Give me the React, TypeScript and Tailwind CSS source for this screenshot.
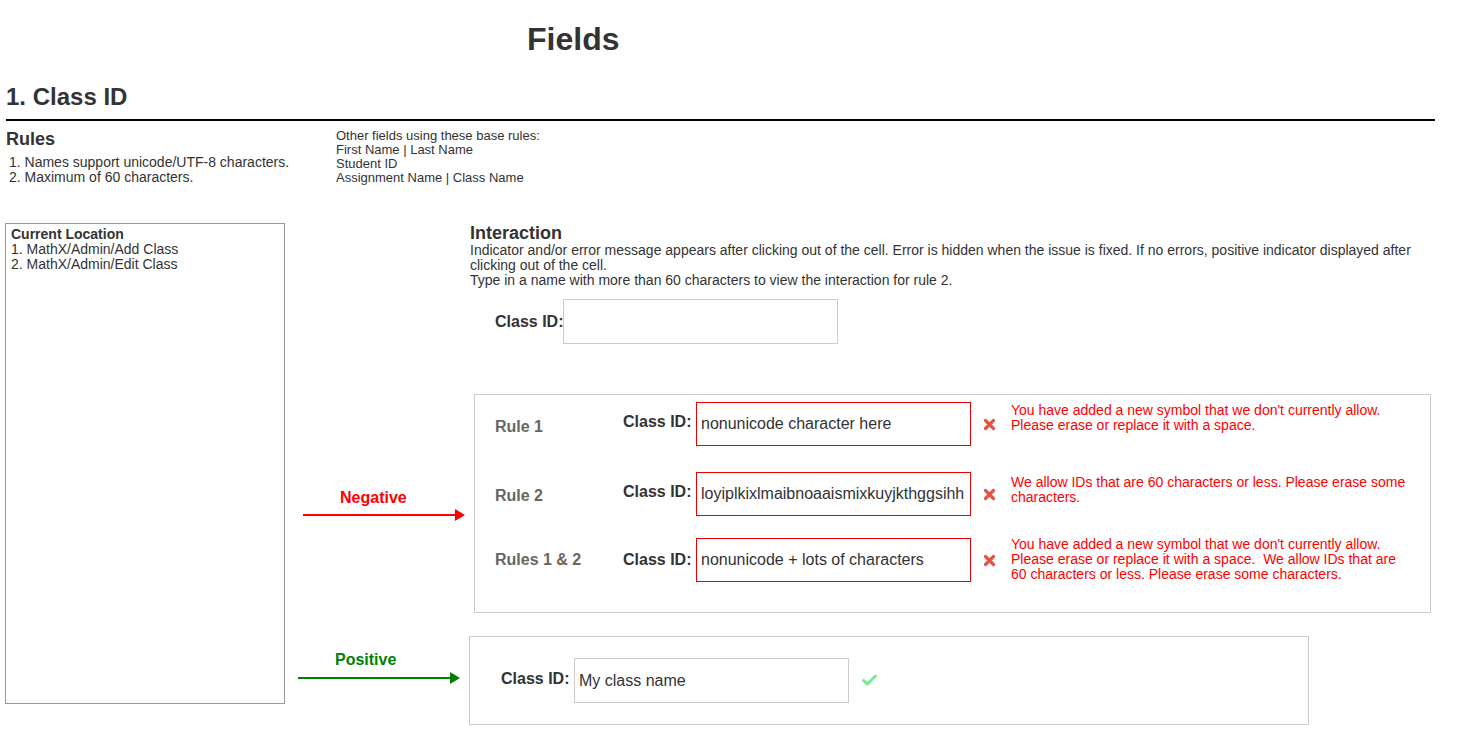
const negativeRows = [
  {
    rule: "Rule 1",
    value: "nonunicode character here",
    ruleTop: "mt-[16px]",
    labelTop: "mt-[11px]",
    errorTop: "mt-[1px]",
    error: ["You have added a new symbol that we don't currently allow.", "Please erase or replace it with a space."],
  },
  {
    rule: "Rule 2",
    value: "loyiplkixlmaibnoaaismixkuyjkthggsihh",
    ruleTop: "mt-[15px]",
    labelTop: "mt-[11px]",
    errorTop: "mt-[3px]",
    error: ["We allow IDs that are 60 characters or less. Please erase some", "characters."],
  },
  {
    rule: "Rules 1 & 2",
    value: "nonunicode + lots of characters",
    ruleTop: "mt-[13px]",
    labelTop: "mt-[13px]",
    errorTop: "mt-[-1px]",
    error: [
      "You have added a new symbol that we don't currently allow.",
      "Please erase or replace it with a space.\u00a0 We allow IDs that are",
      "60 characters or less. Please erase some characters.",
    ],
  },
];

const rowGaps = ["mt-[7px]", "mt-[26px]", "mt-[22px]"];

function Arrow({ color }: { color: string }) {
  return (
    <svg width="162" height="14" viewBox="0 0 162 14">
      <line x1="0" y1="7" x2="154" y2="7" stroke={color} strokeWidth="2" />
      <polygon points="152,1 162,7 152,13" fill={color} />
    </svg>
  );
}

function ErrorIcon() {
  return (
    <svg width="13" height="13" viewBox="0 0 13 13">
      <path d="M2.5 2.5 L10.5 10.5 M10.5 2.5 L2.5 10.5" stroke="#e8533f" strokeWidth="3.2" strokeLinecap="round" />
    </svg>
  );
}

function CheckIcon() {
  return (
    <svg width="15" height="12" viewBox="0 0 15 12">
      <path d="M1.5 6.5 L5.5 10 L13.5 2" stroke="#7de895" strokeWidth="3" fill="none" strokeLinecap="round" strokeLinejoin="round" />
    </svg>
  );
}

export default function App() {
  return (
    <div className="min-h-[747px] w-[1466px] bg-white text-[#333] font-['Liberation_Sans',Arial,Helvetica,sans-serif]">
      <div className="w-[1435px] pl-[6px]">
        <h1 className="pt-[21px] pl-[521px] text-[32px] font-bold leading-[37px]">Fields</h1>
        <h2 className="mt-[25px] text-[24px] font-bold leading-[28px]">1. Class ID</h2>
        <div className="mt-[8px] border-b-2 border-black" />
        <div className="mt-[8px] flex">
          <div className="w-[330px]">
            <h3 className="text-[18px] font-bold leading-[20px]">Rules</h3>
            <ol className="mt-[6px] pl-[3px] text-[14px] leading-[15px]">
              <li>1. Names support unicode/UTF-8 characters.</li>
              <li>2. Maximum of 60 characters.</li>
            </ol>
          </div>
          <div className="text-[13px] leading-[14px]">
            <p>Other fields using these base rules:</p>
            <p>First Name | Last Name</p>
            <p>Student ID</p>
            <p>Assignment Name | Class Name</p>
          </div>
        </div>
      </div>

      <div className="mt-[38px] flex">
        <div className="ml-[5px] h-[481px] w-[280px] border border-[#999] px-[5px] pt-[3px] text-[14px] leading-[15px]">
          <p className="font-bold">Current Location</p>
          <p>1. MathX/Admin/Add Class</p>
          <p>2. MathX/Admin/Edit Class</p>
        </div>

        <div className="ml-[13px]">
          <div className="pl-[172px]">
            <h3 className="text-[18px] font-bold leading-[20px]">Interaction</h3>
            <p className="whitespace-nowrap text-[14px] leading-[15px]">
              Indicator and/or error message appears after clicking out of the cell. Error is hidden when the issue is fixed. If no errors, positive indicator displayed after
              <br />
              clicking out of the cell.
              <br />
              Type in a name with more than 60 characters to view the interaction for rule 2.
            </p>
            <div className="mt-[11px] flex items-center pl-[25px]">
              <span className="w-[68px] whitespace-nowrap text-[16px] font-bold">Class ID:</span>
              <div className="h-[45px] w-[275px] border border-[#ccc]" />
            </div>
          </div>

          <div className="mt-[50px] flex">
            <div className="w-[176px] pl-[5px]">
              <p className="mt-[95px] pl-[37px] text-[16px] font-bold leading-[18px] text-[#f00]">Negative</p>
              <div className="mt-[1px]">
                <Arrow color="#f00" />
              </div>
            </div>
            <div className="h-[219px] w-[957px] border border-[#ccc] pl-[20px]">
              {negativeRows.map((row, i) => (
                <div key={row.rule} className={`flex items-start ${rowGaps[i]}`}>
                  <span className={`w-[128px] text-[16px] font-bold leading-[18px] text-[#666] ${row.ruleTop}`}>{row.rule}</span>
                  <span className={`w-[73px] text-[16px] font-bold leading-[18px] ${row.labelTop}`}>Class ID:</span>
                  <div className="flex h-[44px] w-[275px] items-center overflow-hidden whitespace-nowrap border border-[#e00] pl-[4px] text-[16px]">
                    {row.value}
                  </div>
                  <div className="mt-[16px] ml-[12px] w-[28px]">
                    <ErrorIcon />
                  </div>
                  <div className={`whitespace-nowrap text-[14px] leading-[15px] text-[#f00] ${row.errorTop}`}>
                    {row.error.map((line) => (
                      <p key={line}>{line}</p>
                    ))}
                  </div>
                </div>
              ))}
            </div>
          </div>

          <div className="mt-[23px] flex">
            <div className="w-[171px]">
              <p className="mt-[15px] pl-[37px] text-[16px] font-bold leading-[18px] text-[#008000]">Positive</p>
              <div className="mt-[2px]">
                <Arrow color="#008000" />
              </div>
            </div>
            <div className="flex h-[89px] w-[840px] items-start border border-[#ccc] pl-[31px]">
              <span className="mt-[33px] w-[73px] text-[16px] font-bold leading-[18px]">Class ID:</span>
              <div className="mt-[21px] flex h-[45px] w-[275px] items-center border border-[#ccc] pl-[4px] text-[16px]">
                My class name
              </div>
              <div className="mt-[37px] ml-[13px]">
                <CheckIcon />
              </div>
            </div>
          </div>
        </div>
      </div>
    </div>
  );
}
